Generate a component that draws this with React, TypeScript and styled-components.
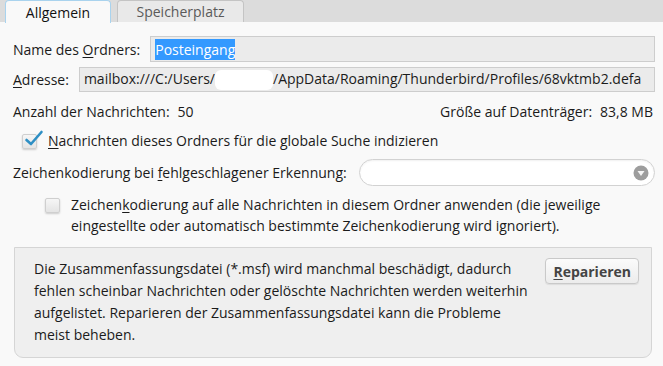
import React from 'react';
import styled, { createGlobalStyle } from 'styled-components';

const GlobalStyles = createGlobalStyle`
  html, body {
    margin: 0;
    padding: 0;
    background: #f9f9f9;
  }
  body {
    font-family: 'Open Sans', 'Noto Sans', sans-serif;
    font-size: 14px;
    color: #1b1b1b;
  }
`;

const Window = styled.div`
  width: 663px;
  height: 366px;
  overflow: hidden;
  background: #f9f9f9;
`;

const TabBar = styled.div`
  display: flex;
  align-items: flex-end;
  height: 22px;
  padding-left: 5px;
  gap: 6px;
  background: #dcdcdc;
`;

const Tab = styled.div<{ active?: boolean }>`
  box-sizing: border-box;
  height: ${(p) => (p.active ? '23px' : '22px')};
  margin-bottom: ${(p) => (p.active ? '-1px' : '0')};
  display: flex;
  align-items: center;
  justify-content: center;
  border-radius: 4px 4px 0 0;
  border: 1px solid ${(p) => (p.active ? '#a9d3ee' : '#c4c4c4')};
  border-bottom: none;
  background: ${(p) => (p.active ? '#f9f9f9' : '#e9e9e9')};
  color: ${(p) => (p.active ? '#111' : '#5a5a5a')};
  width: ${(p) => (p.active ? '106px' : '127px')};
`;

const Panel = styled.div`
  padding: 14px 8px 0 13px;
  display: flex;
  flex-direction: column;
`;

const Row = styled.div<{ gap?: number; top?: number }>`
  display: flex;
  align-items: center;
  gap: ${(p) => p.gap ?? 10}px;
  margin-top: ${(p) => p.top ?? 0}px;
`;

const Label = styled.span`
  white-space: nowrap;
`;

const U = styled.span`
  text-decoration: underline;
  text-underline-offset: 2px;
`;

const Field = styled.div<{ h: number }>`
  flex: 1;
  min-width: 0;
  box-sizing: border-box;
  height: ${(p) => p.h}px;
  background: #ebebeb;
  border: 1px solid #cdcdcd;
  display: flex;
  align-items: center;
  padding-left: 4px;
  white-space: nowrap;
  overflow: hidden;
`;

const FieldText = styled.span`
  flex: none;
  white-space: nowrap;
`;

const Selected = styled.span`
  background: #3399ff;
  color: #fff;
  padding: 1px 0;
`;

const Blank = styled.span`
  display: inline-block;
  width: 58px;
  height: 20px;
  background: #fff;
  border-radius: 6px;
  vertical-align: middle;
`;

const StatsRow = styled.div`
  display: flex;
  justify-content: space-between;
  margin-top: 10px;
  padding-right: 2px;
`;

const Value = styled.span`
  margin-left: 8px;
`;

const CheckRow = styled.div<{ indent: number; top: number }>`
  display: flex;
  align-items: flex-start;
  gap: 11px;
  margin-top: ${(p) => p.top}px;
  padding-left: ${(p) => p.indent}px;
  line-height: 21px;
`;

const Box = styled.div`
  flex: none;
  position: relative;
  box-sizing: border-box;
  width: 15px;
  height: 15px;
  margin-top: 4px;
  border: 1px solid #cfcfcf;
  border-radius: 2px;
  background: linear-gradient(#f6f6f6, #e4e4e4);
  box-shadow: 0 1px 2px rgba(0, 0, 0, 0.18);
`;

const Tick = styled.svg`
  position: absolute;
  left: 1px;
  top: -6px;
`;

const Select = styled.div`
  flex: 1;
  box-sizing: border-box;
  height: 27px;
  border: 1px solid #d2d2d2;
  border-radius: 14px;
  background: #ffffff;
  box-shadow: inset 0 1px 2px rgba(0, 0, 0, 0.06);
  display: flex;
  justify-content: flex-end;
  align-items: center;
  padding-right: 5px;
`;

const Group = styled.div`
  margin: 11px 3px 0 1px;
  box-sizing: border-box;
  height: 111px;
  border: 1px solid #d5d5d5;
  border-radius: 0 0 9px 9px;
  background: #efefef;
  padding: 10px 12px 0 19px;
  display: flex;
  justify-content: space-between;
  align-items: flex-start;
`;

const GroupText = styled.p`
  margin: 0;
  width: 500px;
  line-height: 22px;
`;

const Button = styled.button`
  font: inherit;
  font-weight: 700;
  color: #444;
  height: 26px;
  padding: 0 7px;
  border: 1px solid #c9c9c9;
  border-radius: 4px;
  background: linear-gradient(#fbfbfb, #ececec);
  box-shadow: 0 1px 1px rgba(0, 0, 0, 0.08);
`;

export default function App() {
  return (
    <Window>
      <GlobalStyles />
      <TabBar>
        <Tab active>Allgemein</Tab>
        <Tab>Speicherplatz</Tab>
      </TabBar>
      <Panel>
        <Row>
          <Label>
            Name des <U>O</U>rdners:
          </Label>
          <Field h={26}>
            <Selected>Posteingang</Selected>
          </Field>
        </Row>
        <Row top={5}>
          <Label>
            <U>A</U>dresse:
          </Label>
          <Field h={25}>
            <FieldText>
              mailbox:///C:/Users/<Blank />/AppData/Roaming/Thunderbird/Profiles/68vktmb2.defa
            </FieldText>
          </Field>
        </Row>
        <StatsRow>
          <span>
            Anzahl der Nachrichten:<Value>50</Value>
          </span>
          <span>
            Größe auf Datenträger:<Value>83,8 MB</Value>
          </span>
        </StatsRow>
        <CheckRow indent={9} top={9}>
          <Box>
            <Tick width="20" height="18" viewBox="0 0 20 18">
              <path d="M2.5 11 L7 15 L17.5 3" fill="none" stroke="#2e8fc4" strokeWidth="2.6" strokeLinecap="round" strokeLinejoin="round" />
            </Tick>
          </Box>
          <span>
            <U>N</U>achrichten dieses Ordners für die globale Suche indizieren
          </span>
        </CheckRow>
        <Row top={8} gap={12}>
          <Label>
            Zeichenkodierung bei <U>f</U>ehlgeschlagener Erkennung:
          </Label>
          <Select>
            <svg width="16" height="16" viewBox="0 0 16 16">
              <circle cx="8" cy="8" r="7.5" fill="#9d9d9d" />
              <path d="M4.5 6 L11.5 6 L8 11 Z" fill="#f4f4f4" />
            </svg>
          </Select>
        </Row>
        <CheckRow indent={32} top={8}>
          <Box />
          <span>
            Zeichen<U>k</U>odierung auf alle Nachrichten in diesem Ordner anwenden (die jeweilige
            eingestellte oder automatisch bestimmte Zeichenkodierung wird ignoriert).
          </span>
        </CheckRow>
        <Group>
          <GroupText>
            Die Zusammenfassungsdatei (*.msf) wird manchmal beschädigt, dadurch fehlen scheinbar
            Nachrichten oder gelöschte Nachrichten werden weiterhin aufgelistet. Reparieren der
            Zusammenfassungsdatei kann die Probleme meist beheben.
          </GroupText>
          <Button>
            <U>R</U>eparieren
          </Button>
        </Group>
      </Panel>
    </Window>
  );
}
